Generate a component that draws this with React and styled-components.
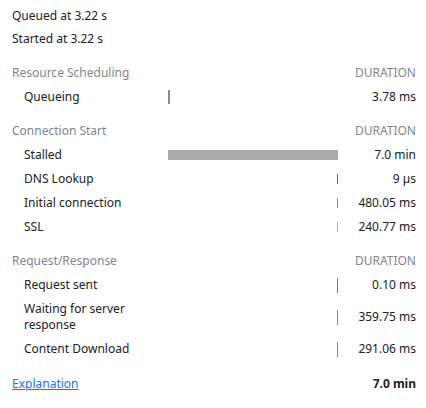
import React from 'react';
import styled, { createGlobalStyle } from 'styled-components';

const GlobalStyle = createGlobalStyle`
  body {
    margin: 0;
    background: #ffffff;
    font-family: "Noto Sans", "Open Sans", "DejaVu Sans", sans-serif;
    font-size: 12px;
    color: #202124;
  }
`;

const Panel = styled.div`
  width: 426px;
  box-sizing: border-box;
  padding: 4px 10px 0 12px;
`;

const InfoLine = styled.div`
  line-height: 23px;
  height: 23px;
`;

const Section = styled.div`
  display: grid;
  grid-template-columns: 156px 170px 1fr;
  margin-top: ${(p) => (p.$first ? '11px' : '10px')};
`;

const HeaderCell = styled.div`
  height: 24px;
  line-height: 24px;
  color: #80868b;
  text-align: ${(p) => (p.$right ? 'right' : 'left')};
  text-transform: ${(p) => (p.$right ? 'uppercase' : 'none')};
`;

const Label = styled.div`
  padding: 4px 12px 4px 12px;
  line-height: 16px;
  display: flex;
  align-items: center;
`;

const BarCell = styled.div`
  display: flex;
  align-items: center;
`;

const Bar = styled.div`
  height: ${(p) => p.$h}px;
  background: ${(p) => p.$color};
  flex: none;
`;

const Duration = styled.div`
  display: flex;
  align-items: center;
  justify-content: flex-end;
  line-height: 16px;
`;

const Footer = styled.div`
  display: flex;
  justify-content: space-between;
  align-items: center;
  height: 24px;
  margin-top: 10px;
`;

const Link = styled.a`
  color: #1a73e8;
  text-decoration: underline;
  cursor: pointer;
`;

const Total = styled.div`
  font-weight: bold;
`;

const sections = [
  {
    title: 'Resource Scheduling',
    rows: [{ name: 'Queueing', left: 0, width: 2, h: 14, color: '#8a8a8a', value: '3.78 ms' }],
  },
  {
    title: 'Connection Start',
    rows: [
      { name: 'Stalled', left: 0, width: 170, h: 10, color: '#aaaaaa', value: '7.0 min' },
      { name: 'DNS Lookup', left: 169, width: 1, h: 10, color: '#1f7c83', value: '9 µs' },
      { name: 'Initial connection', left: 169, width: 1, h: 10, color: '#e8710a', value: '480.05 ms' },
      { name: 'SSL', left: 169, width: 1, h: 10, color: '#c597f5', value: '240.77 ms' },
    ],
  },
  {
    title: 'Request/Response',
    rows: [
      { name: 'Request sent', left: 169, width: 1, h: 15, color: '#0ea0c6', value: '0.10 ms' },
      { name: 'Waiting for server response', left: 169, width: 1, h: 15, color: '#1ec45a', value: '359.75 ms' },
      { name: 'Content Download', left: 169, width: 1, h: 15, color: '#4a8af4', value: '291.06 ms' },
    ],
  },
];

const App = () => {
  return (
    <Panel>
      <GlobalStyle />
      <InfoLine>Queued at 3.22 s</InfoLine>
      <InfoLine>Started at 3.22 s</InfoLine>

      {sections.map((s, i) => (
        <Section key={s.title} $first={i === 0}>
          <HeaderCell>{s.title}</HeaderCell>
          <HeaderCell />
          <HeaderCell $right>Duration</HeaderCell>
          {s.rows.map((r) => (
            <React.Fragment key={r.name}>
              <Label>{r.name}</Label>
              <BarCell>
                <Bar $h={r.h} $color={r.color} style={{ marginLeft: r.left, width: r.width }} />
              </BarCell>
              <Duration>{r.value}</Duration>
            </React.Fragment>
          ))}
        </Section>
      ))}

      <Footer>
        <Link>Explanation</Link>
        <Total>7.0 min</Total>
      </Footer>
    </Panel>
  );
};

export default App;
